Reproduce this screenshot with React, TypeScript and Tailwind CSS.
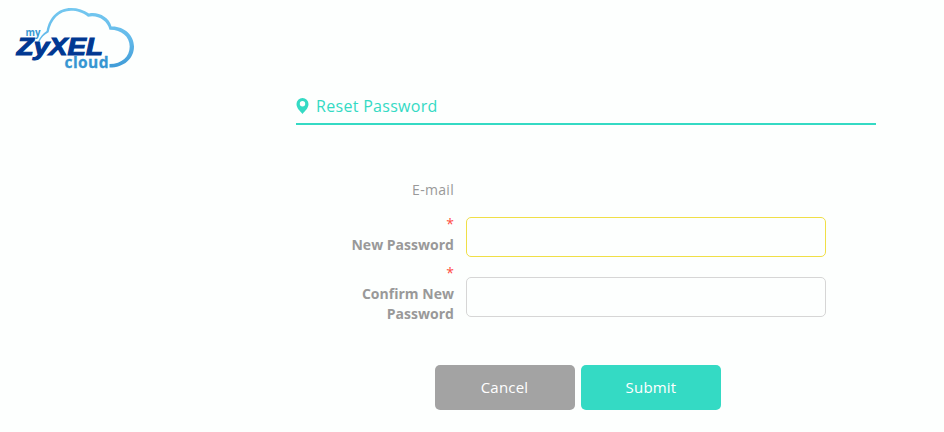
import type { ReactNode } from "react";

function Logo() {
  return (
    <svg width="150" height="80" viewBox="0 0 150 80" className="block" role="img" aria-label="myZyXEL cloud">
      <defs>
        <linearGradient id="sky" x1="0" y1="0" x2="0" y2="1">
          <stop offset="0" stopColor="#74c8f0" />
          <stop offset="0.5" stopColor="#63baea" />
          <stop offset="1" stopColor="#3f9bd7" />
        </linearGradient>
      </defs>
      <path
        fill="url(#sky)"
        d="M38 41.5C40 37.500 42.500 33.500 46.600 31C49 17.500 58 8 71 8C78 8 84 10 89 13.500C98 11.500 109 17 111.500 26.500C124 26 134 35 134 46.500C134 58.500 124 67.600 109.500 67.600V64C122 64 129.700 56.500 129.700 46.500C129.700 36.500 121 29.500 109.500 29.800C107.500 20 97 14.500 88 16.800C83 12.500 77 10.700 71 10.700C59 10.700 51 19.500 48.600 32.300C44 34.500 41.500 38 39.500 41.500Z"
      />
      <text x="25.500" y="36" fontSize="11" fontWeight="700" textLength="15" lengthAdjust="spacingAndGlyphs" fill="#3799d3" className="font-['Open_Sans',sans-serif]">my</text>
      <text x="16.800" y="54.700" fontSize="24" fontWeight="700" fontStyle="italic" textLength="86" lengthAdjust="spacingAndGlyphs" fill="#003892" stroke="#003892" strokeWidth="1.100" className="font-['Liberation_Sans',sans-serif]">ZyXEL</text>
      <text x="64.500" y="67.500" fontSize="15.500" fontWeight="700" textLength="44" lengthAdjust="spacing" fill="#3696d2" stroke="#3696d2" strokeWidth="0.300" className="font-['Open_Sans',sans-serif]">cloud</text>
    </svg>
  );
}

function PasswordRow({ label, active, children }: { label: string; active?: boolean; children: ReactNode }) {
  return (
    <div className="flex items-start gap-3">
      <label className="w-[118px] shrink-0 text-right font-bold tracking-[0.02px]">
        <span className="-mt-px mb-px block font-normal text-[#ff4c43]">*</span>
        {children}
      </label>
      <input
        type="password"
        aria-label={label}
        className={`h-10 w-[360px] rounded-[5px] border bg-transparent px-3 outline-none ${active ? "mt-0.5 border-[#f0df47]" : "mt-[13px] border-[#d6d6d6]"}`}
      />
    </div>
  );
}

export default function App() {
  return (
    <div className="h-[432px] w-full overflow-hidden bg-[#fdfffe] font-['Open_Sans',sans-serif] text-sm leading-5 text-[#999]">
      <header className="h-20">
        <Logo />
      </header>
      <main className="ml-[296px] w-[580px] pt-[10px]">
        <h1 className="flex h-[35px] items-center gap-[7px] border-b-2 border-[#34dac4] pb-px text-base text-[#34dac4]">
          <svg width="13" height="16" viewBox="0 0 13 16" fill="currentColor" className="mb-px">
            <path fillRule="evenodd" d="M6.500 0A6 6 0 0 0 .5 6c0 4 3.500 7 6 10 2.500-3 6-6 6-10a6 6 0 0 0-6-6Zm0 3a2.700 2.700 0 1 1 0 5.400 2.700 2.700 0 0 1 0-5.400Z" />
          </svg>
          <span className="tracking-[0.3px]">Reset Password</span>
        </h1>
        <form className="pl-10 pt-[55px]">
          <div className="w-[118px] text-right tracking-[0.3px]">E-mail</div>
          <div className="mt-[15px]">
            <PasswordRow label="New Password" active>New Password</PasswordRow>
          </div>
          <div className="mt-[7px]">
            <PasswordRow label="Confirm New Password">Confirm New<br />Password</PasswordRow>
          </div>
          <div className="mt-[41px] flex gap-1.5 pl-[99px] text-[15px] tracking-[0.2px] text-white">
            <button type="button" className="h-[45px] w-[140px] rounded-[5px] bg-[#a3a3a3] pb-0.5 pr-px">Cancel</button>
            <button type="button" className="h-[45px] w-[140px] rounded-[5px] bg-[#34dac4] pb-0.5">Submit</button>
          </div>
        </form>
      </main>
    </div>
  );
}
